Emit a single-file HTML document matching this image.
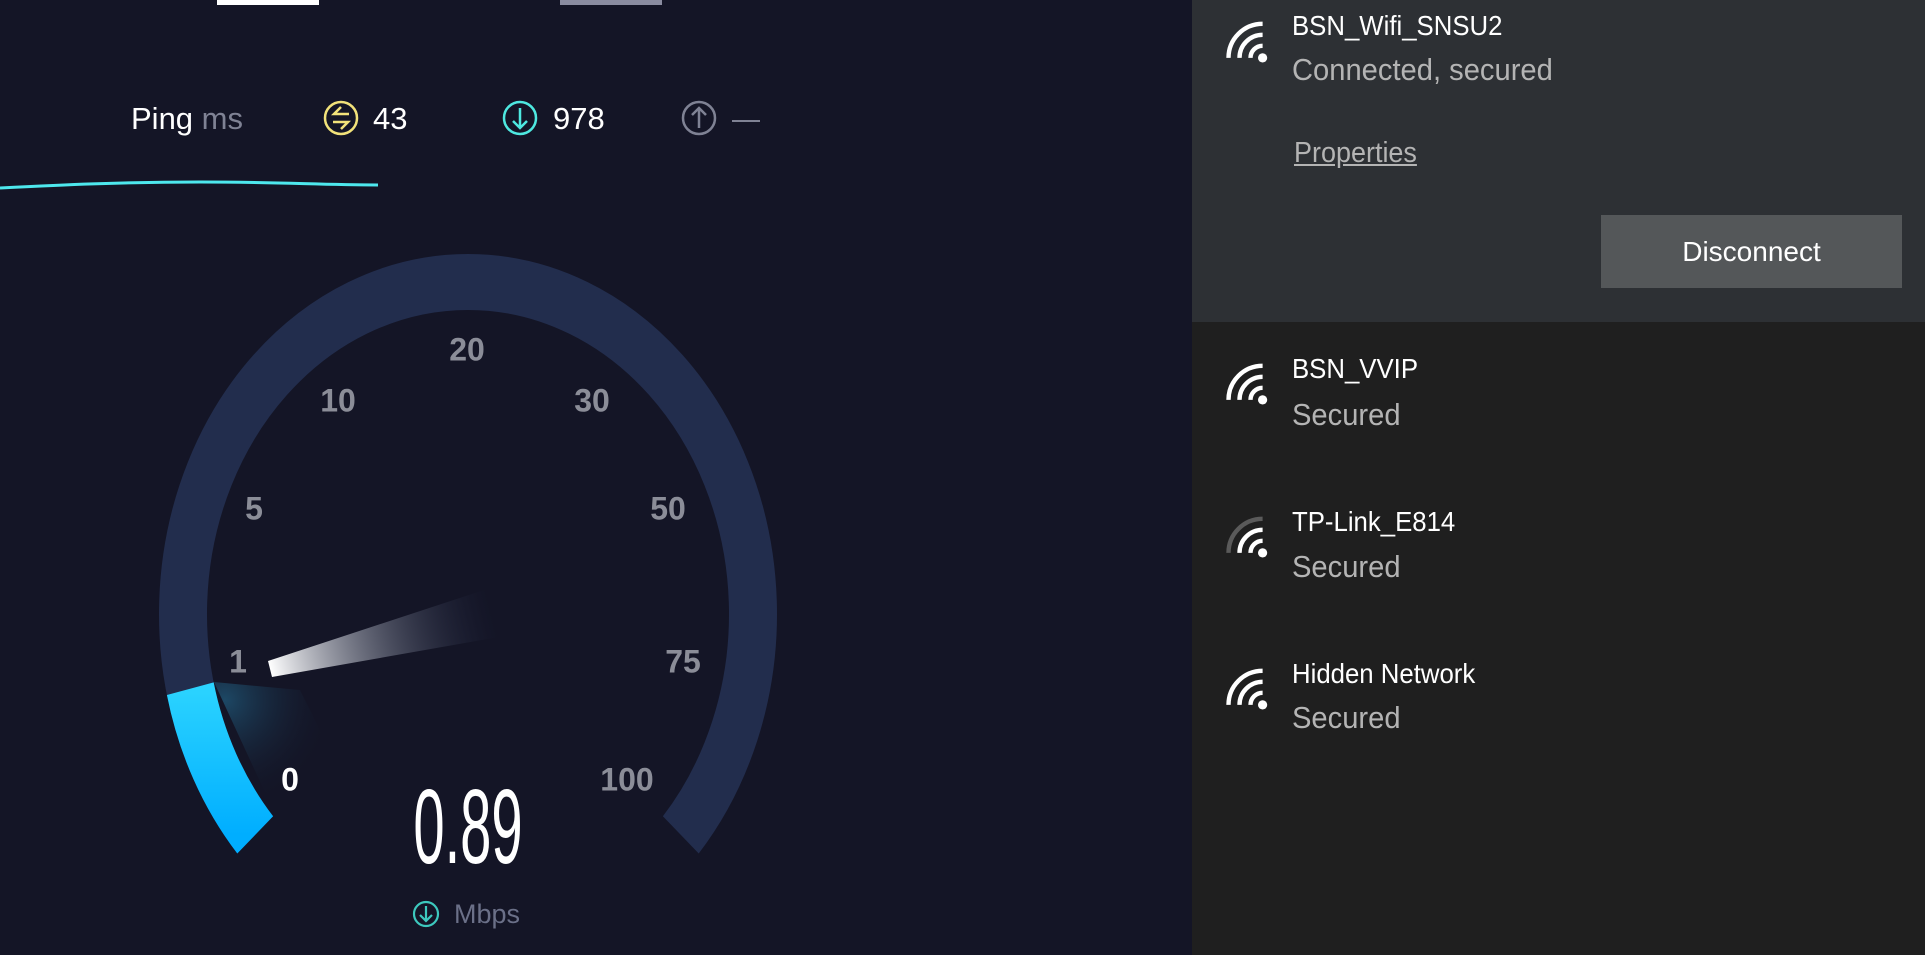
<!DOCTYPE html>
<html><head><meta charset="utf-8"><style>
html,body{margin:0;padding:0}
body{width:1925px;height:955px;position:relative;overflow:hidden;background:#141526;font-family:"Liberation Sans",sans-serif}
.t{position:absolute;white-space:nowrap}
.rp{position:absolute;left:1192px;top:0;width:733px;height:955px;background:#1f1f1f}
.rtop{position:absolute;left:1192px;top:0;width:733px;height:322px;background:#2d3034}
.nm{position:absolute;left:1292px;color:#fff;font-size:28px;transform:scaleX(.92);transform-origin:left}
.st{position:absolute;left:1292px;color:#b4b4b4;font-size:31px;transform:scaleX(.94);transform-origin:left}
.gl{position:absolute;font-weight:bold;font-size:32px;color:#8b8d98;transform:translate(-50%,-50%)}
</style></head><body>
<div style="position:absolute;left:217px;top:0;width:102px;height:5px;background:#fff"></div>
<div style="position:absolute;left:560px;top:0;width:102px;height:5px;background:#8a8ca0"></div>
<div class="t" style="left:131px;top:101px;font-size:31px;color:#fff">Ping <span style="color:#7f8294">ms</span></div>
<div class="t" style="left:373px;top:101px;font-size:31px;color:#fff">43</div>
<div class="t" style="left:553px;top:101px;font-size:31px;color:#fff">978</div>
<div style="position:absolute;left:732px;top:120px;width:28px;height:2px;background:#7f8294"></div>
<svg width="1192" height="955" style="position:absolute;left:0;top:0">
<defs>
<linearGradient id="bl" x1="0" y1="1" x2="0" y2="0"><stop offset="0" stop-color="#00aeff"/><stop offset="1" stop-color="#2bd3ff"/></linearGradient>
<linearGradient id="nd" gradientUnits="userSpaceOnUse" x1="270" y1="669" x2="493" y2="613"><stop offset="0" stop-color="#fff"/><stop offset="1" stop-color="#222d4d" stop-opacity="0"/></linearGradient>
<radialGradient id="gw" gradientUnits="userSpaceOnUse" cx="225" cy="700" r="110"><stop offset="0" stop-color="#1d4865"/><stop offset="1" stop-color="#141526" stop-opacity="0"/></radialGradient>
</defs>
<path d="M0 188 C60 185 120 182 200 182 C280 182 320 185 378 185" stroke="#4ee8ee" stroke-width="3" fill="none"/>
<g fill="none" stroke-width="2.5">
<circle cx="341" cy="118" r="16" stroke="#f2e27a"/>
<path d="M349 114 H334 L341 107 M333 122 H348 L341 129" stroke="#f2e27a"/>
<circle cx="520" cy="118" r="16" stroke="#4ee8e0"/>
<path d="M520 108 V128 M513 121 L520 128 L527 121" stroke="#4ee8e0"/>
<circle cx="699" cy="118" r="16" stroke="#7f8294"/>
<path d="M699 128 V108 M692 115 L699 108 L706 115" stroke="#7f8294"/>
</g>
<g transform="translate(468,614) scale(1,1.165)" fill="none">
<path d="M-212.8 189.6 A285 285 0 1 1 212.8 189.6" stroke="#222d4d" stroke-width="48"/>
</g>
<polygon points="214,682 275,814 335,760 300,690" fill="url(#gw)"/>
<g transform="translate(468,614) scale(1,1.165)" fill="none">
<path d="M-212.8 189.6 A285 285 0 0 1 -277.7 64.1" stroke="url(#bl)" stroke-width="48"/>
</g>
<polygon points="268,661 487,589 499,637 272,677" fill="url(#nd)"/>
<circle cx="426" cy="914" r="12" fill="none" stroke="#3dc9be" stroke-width="2.2"/>
<path d="M426 906 V921 M420 915 L426 921 L432 915" stroke="#3dc9be" stroke-width="2.2" fill="none"/>
</svg>
<div class="gl" style="left:467px;top:350px">20</div>
<div class="gl" style="left:338px;top:401px">10</div>
<div class="gl" style="left:592px;top:401px">30</div>
<div class="gl" style="left:254px;top:509px">5</div>
<div class="gl" style="left:668px;top:509px">50</div>
<div class="gl" style="left:238px;top:662px">1</div>
<div class="gl" style="left:683px;top:662px">75</div>
<div class="gl" style="left:290px;top:780px;color:#fff">0</div>
<div class="gl" style="left:627px;top:780px">100</div>
<div class="t" style="left:468px;top:772px;transform:translateX(-50%) scaleX(.53);font-size:106px;color:#fff;line-height:110px">0.89</div>
<div class="t" style="left:454px;top:899px;font-size:27px;color:#6b7088">Mbps</div>

<div class="rp"></div><div class="rtop"></div>
<div class="nm" style="top:10px">BSN_Wifi_SNSU2</div>
<div class="st" style="top:52px">Connected, secured</div>
<div class="t" style="left:1294px;top:137px;font-size:29px;color:#b4b4b4;text-decoration:underline;transform:scaleX(.93);transform-origin:left">Properties</div>
<div style="position:absolute;left:1601px;top:215px;width:301px;height:73px;background:#545759;color:#fff;font-size:28px;line-height:73px;text-align:center">Disconnect</div>
<div class="nm" style="top:353px">BSN_VVIP</div>
<div class="st" style="top:397px">Secured</div>
<div class="nm" style="top:506px">TP-Link_E814</div>
<div class="st" style="top:549px">Secured</div>
<div class="nm" style="top:658px">Hidden Network</div>
<div class="st" style="top:700px">Secured</div>
<svg width="1925" height="955" style="position:absolute;left:0;top:0" fill="none" stroke-width="4" stroke-linecap="butt">
<g transform="translate(1223,15) scale(1.1)"><circle cx="36" cy="39" r="4.2" fill="#fff" stroke="none"/><path d="M25 39 A11 11 0 0 1 36 28 M15 39 A21 21 0 0 1 36 18 M5 39 A31 31 0 0 1 36 8" stroke="#fff"/></g>
<g transform="translate(1223,357) scale(1.1)"><circle cx="36" cy="39" r="4.2" fill="#fff" stroke="none"/><path d="M25 39 A11 11 0 0 1 36 28 M15 39 A21 21 0 0 1 36 18 M5 39 A31 31 0 0 1 36 8" stroke="#fff"/></g>
<g transform="translate(1223,510) scale(1.1)"><circle cx="36" cy="39" r="4.2" fill="#fff" stroke="none"/><path d="M25 39 A11 11 0 0 1 36 28 M15 39 A21 21 0 0 1 36 18" stroke="#fff"/><path d="M5 39 A31 31 0 0 1 36 8" stroke="#5a5a5a"/></g>
<g transform="translate(1223,662) scale(1.1)"><circle cx="36" cy="39" r="4.2" fill="#fff" stroke="none"/><path d="M25 39 A11 11 0 0 1 36 28 M15 39 A21 21 0 0 1 36 18 M5 39 A31 31 0 0 1 36 8" stroke="#fff"/></g>
</svg>
</body></html>
